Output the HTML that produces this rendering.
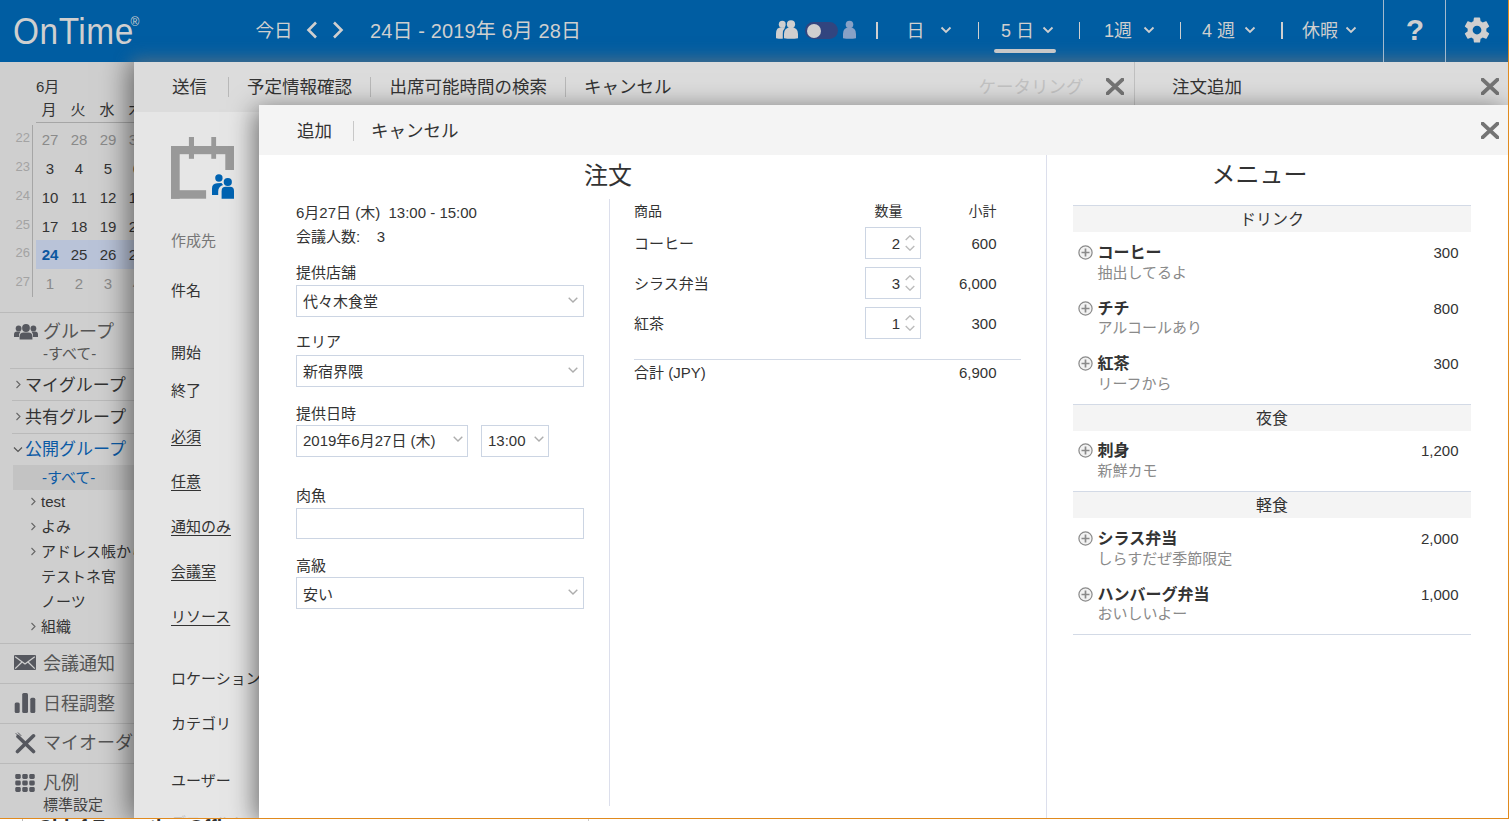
<!DOCTYPE html>
<html lang="ja">
<head>
<meta charset="utf-8">
<title>OnTime</title>
<style>
*{box-sizing:border-box;margin:0;padding:0}
html,body{width:1509px;height:821px;overflow:hidden;background:#fff}
body{font-family:"Liberation Sans","Noto Sans CJK JP",sans-serif;color:#333;position:relative}
.abs{position:absolute}
.t{position:absolute;white-space:nowrap;line-height:24px;height:24px}
#app{position:absolute;left:0;top:0;width:1509px;height:819px;overflow:hidden;background:#cfcfcf;border-right:1px solid #e08a1e;border-bottom:1px solid #e08a1e}
#hdr{position:absolute;left:0;top:0;width:1508px;height:62px;background:#005da2;color:#cfcfcf;overflow:hidden}
#hdr .t{color:#cfcfcf}
.vsep{position:absolute;top:0;width:1px;height:62px;background:#a3b9cd}
.hsep{position:absolute;top:22px;height:17px;background:#cfcfcf}
#side{position:absolute;left:0;top:62px;width:134px;height:756px;overflow:hidden}
.ln{position:absolute;height:1px;background:#bababa}
#p1{position:absolute;left:134px;top:62px;width:1374px;height:756px;background:#e6e6e6;box-shadow:0 0 28px 4px rgba(0,0,0,.55);clip-path:inset(0 0 0 -80px)}
#p1bar{position:absolute;left:0;top:0;width:100%;height:50px;background:#dcdcdc}
.tsep{position:absolute;width:1px;height:20px;background:#b8b8b8}
#p2{position:absolute;left:259px;top:105px;width:1249px;height:713px;background:#fff;box-shadow:-4px 4px 24px 0 rgba(0,0,0,.52)}
#p2bar{position:absolute;left:0;top:0;width:100%;height:50px;background:#f4f4f4}
.box{position:absolute;border:1px solid #ccd5e3;background:#fff}
.sec{position:absolute;left:814px;width:398px;height:27px;border-top:1px solid #d3dae6;background:#f4f4f4;text-align:center;font-size:16px;line-height:27px;color:#333}
.mi-t{font-weight:bold;color:#333}
.mi-d{color:#8a8a8a}
</style>
</head>
<body>
<div id="app">
<div id="hdr">
<div class="abs" style="left:134px;top:62px;width:1400px;height:60px;box-shadow:0 0 16px 2px rgba(119,119,119,.7)"></div>
<div class="t" id="logo" style="left:13px;top:10px;font-size:36.5px;line-height:44px;height:44px;letter-spacing:0.6px;transform-origin:0 50%;transform:scaleX(.915)">OnTime</div>
<div class="t" style="left:130.5px;top:15px;font-size:12px;line-height:14px;height:14px">®</div>
<div class="t" style="left:255.5px;top:19px;font-size:18.5px;">今日</div>
<svg class="abs" style="left:306px;top:21px" width="12" height="18" viewBox="0 0 12 18"><path d="M10 1.5 L2.5 9 L10 16.500" fill="none" stroke="#cfcfcf" stroke-width="2.6"/></svg>
<svg class="abs" style="left:332px;top:21px" width="12" height="18" viewBox="0 0 12 18"><path d="M2 1.5 L9.5 9 L2 16.500" fill="none" stroke="#cfcfcf" stroke-width="2.6"/></svg>
<div class="t" style="left:370px;top:18px;font-size:20px;letter-spacing:0.12px;line-height:26px;height:26px;">24日 - 2019年 6月 28日</div>
<svg class="abs" style="left:775px;top:20.2px" width="24" height="19" viewBox="0 0 24 19"><g fill="#cfcfcf"><circle cx="7.3" cy="4.3" r="3.5"/><path d="M1 18.2 V13.5 Q1 7.2 6.5 7.2 H10 V18.6 Q5 19 1 18.2 Z"/><g stroke="#005da2" stroke-width="2.4"><circle cx="16" cy="4.3" r="4.1"/><path d="M9 18.2 V14 Q9 7.2 16 7.2 Q23 7.2 23 14 V18.2 Q16 19.2 9 18.2 Z"/></g><circle cx="16" cy="4.3" r="4.1"/><path d="M9 18.200 V14 Q9 7.2 16 7.2 Q23 7.2 23 14 V18.2 Q16 19.2 9 18.2 Z"/></g></svg>
<div class="abs" style="left:805px;top:22px;width:33px;height:17px;background:#32457f;border-radius:9px;"></div>
<div class="abs" style="left:806.5px;top:23.5px;width:14px;height:14px;background:#cfcfcf;border-radius:7px;"></div>
<svg class="abs" style="left:842px;top:20.2px" width="15" height="19" viewBox="0 0 15 19"><g fill="#88a1c6"><circle cx="7.5" cy="4.5" r="3.8"/><path d="M1 18.2 V14 Q1 7.2 7.5 7.2 Q14 7.2 14 14 V18.2 Q7.5 19.2 1 18.2 Z"/></g></svg>
<div class="hsep" style="left:876px;width:2px"></div>
<div class="t" style="left:906.5px;top:19px;font-size:18px;">日</div>
<svg class="abs" style="left:940px;top:26px" width="12" height="8" viewBox="0 0 12 8"><path d="M1.5 1.5 L6 6 L10.5 1.5" fill="none" stroke="#cfcfcf" stroke-width="1.8"/></svg>
<div class="hsep" style="left:978px;width:1px"></div>
<div class="t" style="left:1001px;top:19px;font-size:18px;">5 日</div>
<svg class="abs" style="left:1042px;top:26px" width="12" height="8" viewBox="0 0 12 8"><path d="M1.5 1.5 L6 6 L10.5 1.5" fill="none" stroke="#cfcfcf" stroke-width="1.8"/></svg>
<div class="abs" style="left:994px;top:49px;width:62px;height:4px;background:#c8c8c8;border-radius:2px;"></div>
<div class="hsep" style="left:1079px;width:1px"></div>
<div class="t" style="left:1104px;top:19px;font-size:18px;">1週</div>
<svg class="abs" style="left:1143px;top:26px" width="12" height="8" viewBox="0 0 12 8"><path d="M1.5 1.5 L6 6 L10.5 1.5" fill="none" stroke="#cfcfcf" stroke-width="1.8"/></svg>
<div class="hsep" style="left:1180px;width:1px"></div>
<div class="t" style="left:1202px;top:19px;font-size:18px;">4 週</div>
<svg class="abs" style="left:1244px;top:26px" width="12" height="8" viewBox="0 0 12 8"><path d="M1.5 1.5 L6 6 L10.5 1.5" fill="none" stroke="#cfcfcf" stroke-width="1.8"/></svg>
<div class="hsep" style="left:1281px;width:2px"></div>
<div class="t" style="left:1302px;top:19px;font-size:18px;">休暇</div>
<svg class="abs" style="left:1345px;top:26px" width="12" height="8" viewBox="0 0 12 8"><path d="M1.5 1.5 L6 6 L10.5 1.5" fill="none" stroke="#cfcfcf" stroke-width="1.8"/></svg>
<div class="vsep" style="left:1383px"></div>
<div class="t" style="left:1405px;top:13px;width:20px;text-align:center;font-size:30px;font-weight:bold;line-height:34px;height:34px">?</div>
<div class="vsep" style="left:1445px"></div>
<svg class="abs" style="left:1462.4px;top:15.4px" width="30" height="30" viewBox="0 0 24 24"><path fill="#cfcfcf" d="M19.43 12.98c.04-.32.07-.64.07-.98s-.03-.66-.07-.98l2.11-1.65c.19-.15.24-.42.12-.64l-2-3.46c-.12-.22-.39-.3-.61-.22l-2.49 1c-.52-.4-1.08-.73-1.69-.98l-.38-2.65C14.460 2.18 14.250 2 14 2h-4c-.25 0-.46.18-.49.42l-.38 2.65c-.61.25-1.17.59-1.69.98l-2.490-1c-.23-.09-.49 0-.61.22l-2 3.460c-.13.22-.07.49.12.64l2.110 1.650c-.04.32-.07.65-.07.980s.03.660.07.980l-2.110 1.650c-.19.15-.24.42-.12.640l2 3.460c.12.220.39.300.610.220l2.490-1c.520.400 1.080.730 1.690.980l.380 2.650c.03.240.24.420.49.420h4c.250 0 .460-.180.490-.420l.380-2.650c.610-.250 1.170-.590 1.690-.980l2.490 1c.230.090.490 0 .610-.220l2-3.460c.120-.220.070-.490-.120-.640l-2.110-1.650zM12 15.500c-1.930 0-3.500-1.570-3.500-3.500s1.570-3.500 3.500-3.500 3.500 1.570 3.500 3.500-1.570 3.500-3.500 3.500z"/></svg>
</div>
<div id="side">
<div class="t" style="left:36px;top:13px;font-size:15px;">6月</div>
<div class="t" style="left:34px;width:30px;text-align:center;top:36px;font-size:15px;">月</div>
<div class="t" style="left:63px;width:30px;text-align:center;top:36px;font-size:15px;">火</div>
<div class="t" style="left:92px;width:30px;text-align:center;top:36px;font-size:15px;">水</div>
<div class="t" style="left:121px;width:30px;text-align:center;top:36px;font-size:15px;">木</div>
<div class="abs" style="left:36px;top:60px;width:110px;height:1px;background:#a6a6a6;"></div>
<div class="abs" style="left:32px;top:63px;width:1px;height:172px;background:#a6a6a6;"></div>
<div class="abs" style="left:36px;top:178px;width:110px;height:29px;background:#b9c3d8;"></div>
<div class="t" style="left:10px;width:20px;text-align:right;top:63.5px;font-size:13px;color:#a3a3a3;">22</div>
<div class="t" style="left:35px;width:30px;text-align:center;top:66px;font-size:15px;color:#8a8a8a;">27</div>
<div class="t" style="left:64px;width:30px;text-align:center;top:66px;font-size:15px;color:#8a8a8a;">28</div>
<div class="t" style="left:93px;width:30px;text-align:center;top:66px;font-size:15px;color:#8a8a8a;">29</div>
<div class="t" style="left:122px;width:30px;text-align:center;top:66px;font-size:15px;color:#8a8a8a;">30</div>
<div class="t" style="left:10px;width:20px;text-align:right;top:92.5px;font-size:13px;color:#a3a3a3;">23</div>
<div class="t" style="left:35px;width:30px;text-align:center;top:95px;font-size:15px;color:#333;">3</div>
<div class="t" style="left:64px;width:30px;text-align:center;top:95px;font-size:15px;color:#333;">4</div>
<div class="t" style="left:93px;width:30px;text-align:center;top:95px;font-size:15px;color:#333;">5</div>
<div class="t" style="left:122px;width:30px;text-align:center;top:95px;font-size:15px;color:#333;">6</div>
<div class="t" style="left:10px;width:20px;text-align:right;top:121.5px;font-size:13px;color:#a3a3a3;">24</div>
<div class="t" style="left:35px;width:30px;text-align:center;top:124px;font-size:15px;color:#333;">10</div>
<div class="t" style="left:64px;width:30px;text-align:center;top:124px;font-size:15px;color:#333;">11</div>
<div class="t" style="left:93px;width:30px;text-align:center;top:124px;font-size:15px;color:#333;">12</div>
<div class="t" style="left:122px;width:30px;text-align:center;top:124px;font-size:15px;color:#333;">13</div>
<div class="t" style="left:10px;width:20px;text-align:right;top:150.5px;font-size:13px;color:#a3a3a3;">25</div>
<div class="t" style="left:35px;width:30px;text-align:center;top:153px;font-size:15px;color:#333;">17</div>
<div class="t" style="left:64px;width:30px;text-align:center;top:153px;font-size:15px;color:#333;">18</div>
<div class="t" style="left:93px;width:30px;text-align:center;top:153px;font-size:15px;color:#333;">19</div>
<div class="t" style="left:122px;width:30px;text-align:center;top:153px;font-size:15px;color:#333;">20</div>
<div class="t" style="left:10px;width:20px;text-align:right;top:178.5px;font-size:13px;color:#a3a3a3;">26</div>
<div class="t" style="left:35px;width:30px;text-align:center;top:181px;font-size:15px;font-weight:bold;color:#0b57a0;">24</div>
<div class="t" style="left:64px;width:30px;text-align:center;top:181px;font-size:15px;color:#333;">25</div>
<div class="t" style="left:93px;width:30px;text-align:center;top:181px;font-size:15px;color:#333;">26</div>
<div class="t" style="left:122px;width:30px;text-align:center;top:181px;font-size:15px;color:#333;">27</div>
<div class="t" style="left:10px;width:20px;text-align:right;top:207.5px;font-size:13px;color:#a3a3a3;">27</div>
<div class="t" style="left:35px;width:30px;text-align:center;top:210px;font-size:15px;color:#8a8a8a;">1</div>
<div class="t" style="left:64px;width:30px;text-align:center;top:210px;font-size:15px;color:#8a8a8a;">2</div>
<div class="t" style="left:93px;width:30px;text-align:center;top:210px;font-size:15px;color:#8a8a8a;">3</div>
<div class="t" style="left:122px;width:30px;text-align:center;top:210px;font-size:15px;color:#8a8a8a;">4</div>
<div class="ln" style="left:0;top:250px;width:134px"></div>
<svg class="abs" style="left:14px;top:262px" width="24" height="16" viewBox="0 0 24 16"><g fill="#56585f"><circle cx="4.6" cy="4.4" r="2.9"/><path d="M0 13 V10.5 Q0 7.6 3 7.6 H6.5 Q5 9.5 5 12 V13 Z"/><circle cx="19.400" cy="4.4" r="2.9"/><path d="M24 13 V10.5 Q24 7.6 21 7.6 H17.5 Q19 9.5 19 12 V13 Z"/><circle cx="12" cy="4" r="3.9"/><path d="M5.6 15.5 V12.5 Q5.6 8.4 9.6 8.4 H14.4 Q18.4 8.4 18.4 12.5 V15.5 Z"/></g></svg>
<div class="t" style="left:43px;top:258px;font-size:18px;color:#555;">グループ</div>
<div class="t" style="left:43px;top:279.5px;font-size:15px;color:#555;">-すべて-</div>
<div class="ln" style="left:10px;top:306px;width:124px"></div>
<svg class="abs" style="left:14.5px;top:317.5px" width="7" height="9" viewBox="0 0 7 9"><path d="M1.5 1 L5 4.5 L1.5 8" fill="none" stroke="#666" stroke-width="1.1"/></svg>
<div class="t" style="left:25px;top:311.5px;font-size:17px;">マイグループ</div>
<div class="ln" style="left:12px;top:338px;width:122px"></div>
<svg class="abs" style="left:14.5px;top:350px" width="7" height="9" viewBox="0 0 7 9"><path d="M1.5 1 L5 4.5 L1.5 8" fill="none" stroke="#666" stroke-width="1.1"/></svg>
<div class="t" style="left:25px;top:344px;font-size:17px;">共有グループ</div>
<div class="ln" style="left:12px;top:371px;width:122px"></div>
<svg class="abs" style="left:13px;top:384px" width="10" height="7" viewBox="0 0 10 7"><path d="M1 1.5 L5 5.5 L9 1.5" fill="none" stroke="#555" stroke-width="1.2"/></svg>
<div class="t" style="left:25px;top:376px;font-size:17px;color:#0b5aa5;">公開グループ</div>
<div class="abs" style="left:13px;top:403px;width:121px;height:25px;background:#c3c3c3;"></div>
<div class="t" style="left:42px;top:403.5px;font-size:15px;color:#0b5aa5;">-すべて-</div>
<svg class="abs" style="left:30px;top:434.5px" width="7" height="9" viewBox="0 0 7 9"><path d="M1.5 1 L5 4.5 L1.5 8" fill="none" stroke="#666" stroke-width="1.1"/></svg>
<div class="t" style="left:41px;top:428px;font-size:15px;">test</div>
<svg class="abs" style="left:30px;top:459.5px" width="7" height="9" viewBox="0 0 7 9"><path d="M1.5 1 L5 4.5 L1.5 8" fill="none" stroke="#666" stroke-width="1.1"/></svg>
<div class="t" style="left:41px;top:453px;font-size:15px;">よみ</div>
<svg class="abs" style="left:30px;top:484.5px" width="7" height="9" viewBox="0 0 7 9"><path d="M1.5 1 L5 4.5 L1.5 8" fill="none" stroke="#666" stroke-width="1.1"/></svg>
<div class="t" style="left:41px;top:478px;font-size:15px;">アドレス帳から</div>
<div class="t" style="left:41px;top:503px;font-size:15px;">テストネ官</div>
<div class="t" style="left:41px;top:528px;font-size:15px;">ノーツ</div>
<svg class="abs" style="left:30px;top:559.5px" width="7" height="9" viewBox="0 0 7 9"><path d="M1.5 1 L5 4.5 L1.5 8" fill="none" stroke="#666" stroke-width="1.1"/></svg>
<div class="t" style="left:41px;top:553px;font-size:15px;">組織</div>
<div class="ln" style="left:0;top:581px;width:134px"></div>
<svg class="abs" style="left:14px;top:593px" width="22" height="15" viewBox="0 0 22 15"><rect x="0" y="0" width="22" height="15" rx="1" fill="#56585f"/><path d="M1.2 1.8 L11 9 L20.8 1.8 M1.2 13.6 L8 7 M20.8 13.6 L14 7" fill="none" stroke="#cfcfcf" stroke-width="1.3"/></svg>
<div class="t" style="left:43px;top:589.5px;font-size:18px;color:#555;">会議通知</div>
<div class="ln" style="left:0;top:621px;width:134px"></div>
<svg class="abs" style="left:14px;top:631px" width="22" height="20" viewBox="0 0 22 20"><g fill="#56585f"><rect x="0.7" y="9.5" width="5" height="10.5" rx="1.5"/><rect x="8.2" y="0" width="5.8" height="20" rx="1.5"/><rect x="16.300" y="4.7" width="5" height="15.3" rx="1.5"/></g></svg>
<div class="t" style="left:43px;top:629.5px;font-size:18px;color:#555;">日程調整</div>
<div class="ln" style="left:0;top:661px;width:134px"></div>
<svg class="abs" style="left:14px;top:670px" width="22" height="22" viewBox="0 0 22 22"><g stroke="#56585f" stroke-linecap="round" fill="none"><path d="M4 4.5 L19.5 19.5" stroke-width="3.6"/><path d="M19.5 3.8 L3.5 19.500" stroke-width="3.6"/><path d="M2 1.5 L6 5.5 M4.2 0.8 L7 3.6" stroke-width="1"/></g></svg>
<div class="t" style="left:43px;top:669px;font-size:18px;color:#555;">マイオーダー</div>
<div class="ln" style="left:0;top:701px;width:134px"></div>
<svg class="abs" style="left:15px;top:712px" width="20" height="18" viewBox="0 0 19.5 18"><g fill="#56585f"><rect x="0" y="0" width="5.5" height="5" rx="1.4"/><rect x="7" y="0" width="5.5" height="5" rx="1.4"/><rect x="14" y="0" width="5.5" height="5" rx="1.4"/><rect x="0" y="6.5" width="5.5" height="5" rx="1.4"/><rect x="7" y="6.5" width="5.5" height="5" rx="1.4"/><rect x="14" y="6.5" width="5.5" height="5" rx="1.4"/><rect x="0" y="13" width="5.5" height="5" rx="1.4"/><rect x="7" y="13" width="5.5" height="5" rx="1.4"/><rect x="14" y="13" width="5.5" height="5" rx="1.4"/></g></svg>
<div class="t" style="left:43px;top:709px;font-size:18px;color:#555;">凡例</div>
<div class="t" style="left:43px;top:730.5px;font-size:15px;color:#444;">標準設定</div>
</div>
<div id="p1">
<div id="p1bar"></div>
<div class="t" style="left:38px;top:13px;font-size:17.5px;">送信</div>
<div class="abs" style="left:94px;top:15px;width:1px;height:20px;background:#b8b8b8;"></div>
<div class="t" style="left:113px;top:13px;font-size:17.5px;">予定情報確認</div>
<div class="abs" style="left:236px;top:15px;width:1px;height:20px;background:#b8b8b8;"></div>
<div class="t" style="left:255.5px;top:13px;font-size:17.5px;">出席可能時間の検索</div>
<div class="abs" style="left:431px;top:15px;width:1px;height:20px;background:#b8b8b8;"></div>
<div class="t" style="left:450px;top:13px;font-size:17.5px;">キャンセル</div>
<div class="t" style="left:844.5px;top:13px;font-size:17.5px;color:#c2c2c2;">ケータリング</div>
<svg class="abs" style="left:972px;top:16px" width="18" height="17" viewBox="0 0 18 17"><path d="M1.6 1.6 L16.4 15.4 M16.400 1.6 L1.6 15.4" fill="none" stroke="#747474" stroke-width="3.9" stroke-linecap="round"/></svg>
<div class="abs" style="left:1000px;top:0px;width:1px;height:44px;background:#c0c0c0;"></div>
<div class="t" style="left:1038px;top:13px;font-size:17.5px;">注文追加</div>
<svg class="abs" style="left:1347px;top:16px" width="18" height="17" viewBox="0 0 18 17"><path d="M1.6 1.6 L16.4 15.4 M16.400 1.6 L1.6 15.4" fill="none" stroke="#747474" stroke-width="3.9" stroke-linecap="round"/></svg>
<svg class="abs" style="left:37px;top:75px" width="64" height="62" viewBox="0 0 64 62"><g fill="#999"><rect x="0" y="9" width="8.7" height="52.7"/><rect x="0" y="9" width="63" height="8.2"/><rect x="54.300" y="9" width="8.7" height="24"/><rect x="0" y="53.200" width="35.1" height="8.5"/><rect x="17.900" y="0" width="5.1" height="21.8"/><rect x="40.300" y="0" width="4.8" height="21.8"/></g><g fill="#0063b1"><circle cx="47.9" cy="41" r="3.7"/><path d="M41 58 V51.5 Q41 46.4 46 46.2 L50.5 46 L52 48 Q47.2 49.5 47.2 54.5 V58 Z"/><circle cx="56.800" cy="45" r="4.1"/><path d="M50.6 61.7 V54 Q50.6 49.8 54.6 49.8 H59 Q63 49.8 63 54 V61.7 Z"/></g></svg>
<div class="t" style="left:37px;top:166.5px;font-size:15px;color:#777;">作成先</div>
<div class="t" style="left:37px;top:216.5px;font-size:15px;">件名</div>
<div class="t" style="left:37px;top:278.5px;font-size:15px;">開始</div>
<div class="t" style="left:37px;top:316.5px;font-size:15px;">終了</div>
<div class="t" style="left:37px;top:362.5px;font-size:15px;text-decoration:underline;text-underline-offset:3px;">必須</div>
<div class="t" style="left:37px;top:407.5px;font-size:15px;text-decoration:underline;text-underline-offset:3px;">任意</div>
<div class="t" style="left:37px;top:452.5px;font-size:15px;text-decoration:underline;text-underline-offset:3px;">通知のみ</div>
<div class="t" style="left:37px;top:497.5px;font-size:15px;text-decoration:underline;text-underline-offset:3px;">会議室</div>
<div class="t" style="left:37px;top:542.5px;font-size:15px;text-decoration:underline;text-underline-offset:3px;">リソース</div>
<div class="t" style="left:37px;top:604.5px;font-size:15px;">ロケーション</div>
<div class="t" style="left:37px;top:649.5px;font-size:15px;">カテゴリ</div>
<div class="t" style="left:37px;top:706.5px;font-size:15px;">ユーザー</div>
<div class="t" style="left:37px;top:749px;font-size:15px;color:#c6c6c6;">デフォルト</div>
</div>
<div id="p2">
<div id="p2bar"></div>
<div class="t" style="left:38px;top:14px;font-size:17.5px;">追加</div>
<div class="abs" style="left:94px;top:16px;width:1px;height:20px;background:#c8c8c8;"></div>
<div class="t" style="left:112px;top:14px;font-size:17.5px;">キャンセル</div>
<svg class="abs" style="left:1222px;top:17px" width="18" height="17" viewBox="0 0 18 17"><path d="M1.6 1.6 L16.4 15.4 M16.400 1.6 L1.6 15.4" fill="none" stroke="#747474" stroke-width="3.9" stroke-linecap="round"/></svg>
<div class="abs" style="left:350px;top:94px;width:1px;height:607px;background:#dcdfec;"></div>
<div class="abs" style="left:787px;top:50px;width:1px;height:664px;background:#dcdfec;"></div>
<div class="t" style="left:249px;width:200px;text-align:center;top:54.5px;font-size:24px;line-height:32px;height:32px;">注文</div>
<div class="t" style="left:900.5px;width:200px;text-align:center;top:54px;font-size:24px;line-height:32px;height:32px;">メニュー</div>
<div class="t" style="left:37px;top:95.5px;font-size:15px;">6月27日 (木)&nbsp; 13:00 - 15:00</div>
<div class="t" style="left:37px;top:119.5px;font-size:15px;">会議人数:&nbsp;&nbsp;&nbsp; 3</div>
<div class="t" style="left:37px;top:156px;font-size:15px;">提供店舗</div>
<div class="box" style="left:37px;top:179.5px;width:288px;height:32px"></div>
<div class="t" style="left:44px;top:184.5px;font-size:15px;">代々木食堂</div>
<svg class="abs" style="left:309px;top:191.5px" width="10" height="6" viewBox="0 0 10 6"><path d="M0.7 0.7 L5 5 L9.3 0.7" fill="none" stroke="#adadad" stroke-width="1.4"/></svg>
<div class="t" style="left:37px;top:225px;font-size:15px;">エリア</div>
<div class="box" style="left:37px;top:249.5px;width:288px;height:32px"></div>
<div class="t" style="left:44px;top:254.5px;font-size:15px;">新宿界隈</div>
<svg class="abs" style="left:309px;top:261.5px" width="10" height="6" viewBox="0 0 10 6"><path d="M0.7 0.7 L5 5 L9.3 0.7" fill="none" stroke="#adadad" stroke-width="1.4"/></svg>
<div class="t" style="left:37px;top:296.5px;font-size:15px;">提供日時</div>
<div class="box" style="left:37px;top:319.5px;width:172px;height:32px"></div>
<div class="t" style="left:44px;top:323.5px;font-size:15px;">2019年6月27日 (木)</div>
<svg class="abs" style="left:193.5px;top:331px" width="10" height="6" viewBox="0 0 10 6"><path d="M0.7 0.7 L5 5 L9.3 0.7" fill="none" stroke="#adadad" stroke-width="1.4"/></svg>
<div class="box" style="left:222px;top:319.5px;width:68px;height:32px"></div>
<div class="t" style="left:229px;top:323.5px;font-size:15px;">13:00</div>
<svg class="abs" style="left:274.5px;top:331px" width="10" height="6" viewBox="0 0 10 6"><path d="M0.7 0.7 L5 5 L9.3 0.7" fill="none" stroke="#adadad" stroke-width="1.4"/></svg>
<div class="t" style="left:37px;top:379px;font-size:15px;">肉魚</div>
<div class="box" style="left:37px;top:402.5px;width:288px;height:31.5px"></div>
<div class="t" style="left:37px;top:449px;font-size:15px;">高級</div>
<div class="box" style="left:37px;top:472px;width:288px;height:32px"></div>
<div class="t" style="left:44px;top:477.5px;font-size:15px;">安い</div>
<svg class="abs" style="left:309px;top:484px" width="10" height="6" viewBox="0 0 10 6"><path d="M0.7 0.7 L5 5 L9.3 0.7" fill="none" stroke="#adadad" stroke-width="1.4"/></svg>
<div class="t" style="left:375px;top:93.5px;font-size:14px;">商品</div>
<div class="t" style="left:615.5px;top:93.5px;font-size:14px;">数量</div>
<div class="t" style="left:617.5px;width:120px;text-align:right;top:93.5px;font-size:14px;">小計</div>
<div class="t" style="left:375px;top:126.5px;font-size:15px;">コーヒー</div>
<div class="box" style="left:606px;top:122.2px;width:56px;height:31.5px"></div>
<div class="t" style="left:521px;width:120px;text-align:right;top:126.5px;font-size:15px;">2</div>
<svg class="abs" style="left:646px;top:130px" width="10" height="16" viewBox="0 0 10 16"><path d="M0.7 5 L5 0.8 L9.3 5 M0.7 11 L5 15.2 L9.3 11" fill="none" stroke="#bcbcbc" stroke-width="1.4"/></svg>
<div class="t" style="left:617.5px;width:120px;text-align:right;top:126.5px;font-size:15px;">600</div>
<div class="t" style="left:375px;top:166.5px;font-size:15px;">シラス弁当</div>
<div class="box" style="left:606px;top:162.2px;width:56px;height:31.5px"></div>
<div class="t" style="left:521px;width:120px;text-align:right;top:166.5px;font-size:15px;">3</div>
<svg class="abs" style="left:646px;top:170px" width="10" height="16" viewBox="0 0 10 16"><path d="M0.7 5 L5 0.8 L9.3 5 M0.7 11 L5 15.2 L9.3 11" fill="none" stroke="#bcbcbc" stroke-width="1.4"/></svg>
<div class="t" style="left:617.5px;width:120px;text-align:right;top:166.5px;font-size:15px;">6,000</div>
<div class="t" style="left:375px;top:206.5px;font-size:15px;">紅茶</div>
<div class="box" style="left:606px;top:202.2px;width:56px;height:31.5px"></div>
<div class="t" style="left:521px;width:120px;text-align:right;top:206.5px;font-size:15px;">1</div>
<svg class="abs" style="left:646px;top:210px" width="10" height="16" viewBox="0 0 10 16"><path d="M0.7 5 L5 0.8 L9.3 5 M0.7 11 L5 15.2 L9.3 11" fill="none" stroke="#bcbcbc" stroke-width="1.4"/></svg>
<div class="t" style="left:617.5px;width:120px;text-align:right;top:206.5px;font-size:15px;">300</div>
<div class="abs" style="left:375px;top:254px;width:387px;height:1px;background:#d3dae6;"></div>
<div class="t" style="left:375px;top:256px;font-size:15px;">合計 (JPY)</div>
<div class="t" style="left:617.5px;width:120px;text-align:right;top:256px;font-size:15px;">6,900</div>
<div class="sec" style="top:100px">ドリンク</div>
<svg class="abs" style="left:819px;top:140px" width="15" height="15" viewBox="0 0 15 15"><circle cx="7.5" cy="7.5" r="6.6" fill="#f2f2f2" stroke="#8a8a8a" stroke-width="1.2"/><path d="M3.5 7.5 H11.5 M7.5 3.5 V11.5" stroke="#8a8a8a" stroke-width="1.7" fill="none"/></svg>
<div class="t mi-t" style="left:838.5px;top:136px;font-size:16px;">コーヒー</div>
<div class="t" style="left:1079.5px;width:120px;text-align:right;top:136px;font-size:15px;">300</div>
<div class="t mi-d" style="left:838.5px;top:155.5px;font-size:15px;">抽出してるよ</div>
<svg class="abs" style="left:819px;top:195.5px" width="15" height="15" viewBox="0 0 15 15"><circle cx="7.5" cy="7.5" r="6.6" fill="#f2f2f2" stroke="#8a8a8a" stroke-width="1.2"/><path d="M3.5 7.5 H11.5 M7.5 3.5 V11.5" stroke="#8a8a8a" stroke-width="1.7" fill="none"/></svg>
<div class="t mi-t" style="left:838.5px;top:191.5px;font-size:16px;">チチ</div>
<div class="t" style="left:1079.5px;width:120px;text-align:right;top:191.5px;font-size:15px;">800</div>
<div class="t mi-d" style="left:838.5px;top:211px;font-size:15px;">アルコールあり</div>
<svg class="abs" style="left:819px;top:251px" width="15" height="15" viewBox="0 0 15 15"><circle cx="7.5" cy="7.5" r="6.6" fill="#f2f2f2" stroke="#8a8a8a" stroke-width="1.2"/><path d="M3.5 7.5 H11.5 M7.5 3.5 V11.5" stroke="#8a8a8a" stroke-width="1.7" fill="none"/></svg>
<div class="t mi-t" style="left:838.5px;top:247px;font-size:16px;">紅茶</div>
<div class="t" style="left:1079.5px;width:120px;text-align:right;top:247px;font-size:15px;">300</div>
<div class="t mi-d" style="left:838.5px;top:266.5px;font-size:15px;">リーフから</div>
<div class="sec" style="top:299px">夜食</div>
<svg class="abs" style="left:819px;top:338px" width="15" height="15" viewBox="0 0 15 15"><circle cx="7.5" cy="7.5" r="6.6" fill="#f2f2f2" stroke="#8a8a8a" stroke-width="1.2"/><path d="M3.5 7.5 H11.5 M7.5 3.5 V11.5" stroke="#8a8a8a" stroke-width="1.7" fill="none"/></svg>
<div class="t mi-t" style="left:838.5px;top:334px;font-size:16px;">刺身</div>
<div class="t" style="left:1079.5px;width:120px;text-align:right;top:334px;font-size:15px;">1,200</div>
<div class="t mi-d" style="left:838.5px;top:353.5px;font-size:15px;">新鮮カモ</div>
<div class="sec" style="top:386px">軽食</div>
<svg class="abs" style="left:819px;top:426px" width="15" height="15" viewBox="0 0 15 15"><circle cx="7.5" cy="7.5" r="6.6" fill="#f2f2f2" stroke="#8a8a8a" stroke-width="1.2"/><path d="M3.5 7.5 H11.5 M7.5 3.5 V11.5" stroke="#8a8a8a" stroke-width="1.7" fill="none"/></svg>
<div class="t mi-t" style="left:838.5px;top:422px;font-size:16px;">シラス弁当</div>
<div class="t" style="left:1079.5px;width:120px;text-align:right;top:422px;font-size:15px;">2,000</div>
<div class="t mi-d" style="left:838.5px;top:441.5px;font-size:15px;">しらすだぜ季節限定</div>
<svg class="abs" style="left:819px;top:481.5px" width="15" height="15" viewBox="0 0 15 15"><circle cx="7.5" cy="7.5" r="6.6" fill="#f2f2f2" stroke="#8a8a8a" stroke-width="1.2"/><path d="M3.5 7.5 H11.5 M7.5 3.5 V11.5" stroke="#8a8a8a" stroke-width="1.7" fill="none"/></svg>
<div class="t mi-t" style="left:838.5px;top:477.5px;font-size:16px;">ハンバーグ弁当</div>
<div class="t" style="left:1079.5px;width:120px;text-align:right;top:477.5px;font-size:15px;">1,000</div>
<div class="t mi-d" style="left:838.5px;top:497px;font-size:15px;">おいしいよー</div>
<div class="abs" style="left:814px;top:529px;width:398px;height:1px;background:#d3dae6;"></div>
</div>
</div>
<div class="abs" style="left:0;top:819px;width:1509px;height:2px;overflow:hidden;background:#fff"><div class="t" style="left:38px;top:-4px;font-size:19.5px;font-weight:bold;color:#333">Chief Executive Officer</div><div class="abs" style="left:22px;top:0;width:1px;height:2px;background:#bbb"></div><div class="abs" style="left:588px;top:0;width:1px;height:2px;background:#ccc"></div></div>
</body>
</html>
